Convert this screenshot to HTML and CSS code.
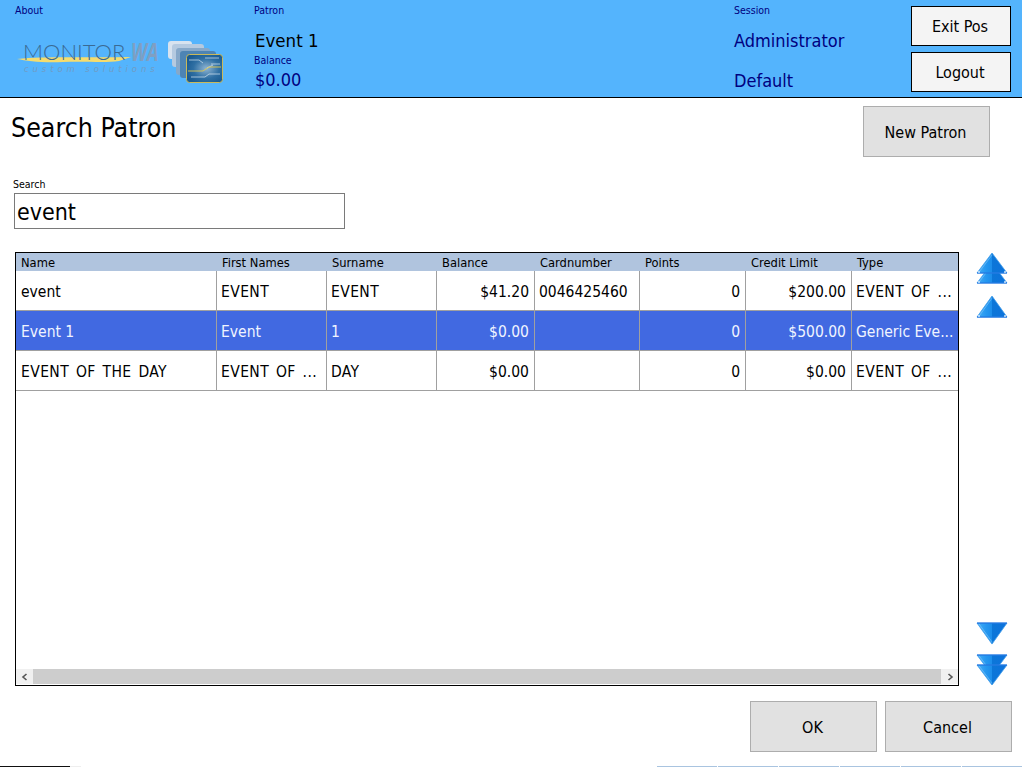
FILE: index.html
```html
<!DOCTYPE html>
<html lang="en">
<head>
<meta charset="utf-8">
<title>Search Patron</title>
<link rel="stylesheet" href="styles.css">
</head>
<body>
<svg class="defs" width="0" height="0" aria-hidden="true">
  <defs>
    <linearGradient id="arrowFill" x1="0" y1="0" x2="1" y2="0">
      <stop offset="0" stop-color="#45aef7"/>
      <stop offset="0.3" stop-color="#2597f0"/>
      <stop offset="0.49" stop-color="#1c8dea"/>
      <stop offset="0.51" stop-color="#0c76d8"/>
      <stop offset="1" stop-color="#0d72dc"/>
    </linearGradient>
    <radialGradient id="chipFill" cx="0.55" cy="0.5" r="0.6">
      <stop offset="0" stop-color="#8fb4d2"/>
      <stop offset="0.6" stop-color="#2f6fa3"/>
      <stop offset="1" stop-color="#1a5a90"/>
    </radialGradient>
    <g id="upArrow">
      <path d="M16 1 L31 21 H1Z" fill="url(#arrowFill)" stroke="#3f9cea" stroke-width="0.8"/>
      <path d="M16 3 L3 20.2" fill="none" stroke="#8fd0fa" stroke-width="0.7" opacity="0.75"/>
      <path d="M1 21 H31" stroke="#1b6fe0" stroke-width="1"/>
      <circle cx="3" cy="20" r="1" fill="#cfe6fb"/>
      <circle cx="29" cy="20" r="1" fill="#cfe6fb"/>
    </g>
    <g id="downArrow">
      <path d="M16 21 L31 1 H1Z" fill="url(#arrowFill)" stroke="#3f9cea" stroke-width="0.8"/>
      <path d="M16 19 L3 1.8" fill="none" stroke="#8fd0fa" stroke-width="0.7" opacity="0.75"/>
      <path d="M1 1 H31" stroke="#1b6fe0" stroke-width="1"/>
    </g>
  </defs>
</svg>
<div class="app">
  <header class="topbar">
    <section class="about">
      <div class="tiny about-label">About</div>
      <svg class="logo" width="212" height="50" viewBox="0 0 212 50">
        <path d="M2 21 C30 18 70 20 116 19 L104 23 C90 25 70 23 48 24 C28 25 12 23 2 21Z" fill="#f5dc6e"/>
        <text x="8" y="22" class="logo-main">MONITOR</text>
        <g transform="translate(116 23) scale(0.72 1)"><text x="0" y="0" class="logo-wa">WA</text></g>
        <text x="9" y="34" class="logo-sub">custom solutions</text>
        <rect x="153" y="3" width="24" height="18" rx="3" fill="#d8e3ef"/>
        <rect x="157" y="6" width="32" height="23" rx="3" fill="#b5cae0"/>
        <rect x="161" y="10" width="34" height="27" rx="3" fill="#86a8c9"/>
        <rect x="165" y="13" width="36" height="27" rx="3" fill="#4d84b4"/>
        <rect x="171.5" y="16.5" width="36" height="28" rx="3" fill="url(#chipFill)" stroke="#c9b95a"/>
        <path d="M174 22 H184 L188 25 M190 20 H204 M176 39 H190 L194 36 H205 M196 26 H205 M192 30 L198 27" fill="none" stroke="#d7e6f2" stroke-width="0.7"/>
        <path d="M173 33 H188 L194 29 H206" fill="none" stroke="#e2c84e" stroke-width="0.9"/>
      </svg>
    </section>
    <section class="patron">
      <div class="tiny">Patron</div>
      <div class="patron-name">Event 1</div>
      <div class="tiny balance-label">Balance</div>
      <div class="value">$0.00</div>
    </section>
    <section class="session">
      <div class="tiny">Session</div>
      <div class="value session-user">Administrator</div>
      <div class="value session-profile">Default</div>
    </section>
    <div class="top-actions">
      <button class="top-btn">Exit Pos</button>
      <button class="top-btn">Logout</button>
    </div>
  </header>

  <main class="content">
    <div class="title-row">
      <h1 class="title">Search Patron</h1>
      <button class="btn new-patron">New Patron</button>
    </div>

    <div class="search">
      <label class="search-label" for="q">Search</label>
      <input class="search-input" id="q" type="text" value="event">
    </div>

    <div class="grid-row">
      <div class="grid">
        <div class="row head">
          <div>Name</div><div>First Names</div><div>Surname</div><div>Balance</div><div>Cardnumber</div><div>Points</div><div>Credit Limit</div><div>Type</div>
        </div>
        <div class="row">
          <div>event</div><div class="caps">EVENT</div><div class="caps">EVENT</div><div class="num">$41.20</div><div>0046425460</div><div class="num">0</div><div class="num">$200.00</div><div class="caps">EVENT OF ...</div>
        </div>
        <div class="row selected">
          <div>Event 1</div><div>Event</div><div>1</div><div class="num">$0.00</div><div></div><div class="num">0</div><div class="num">$500.00</div><div>Generic Eve...</div>
        </div>
        <div class="row">
          <div class="caps">EVENT OF THE DAY</div><div class="caps">EVENT OF ...</div><div class="caps">DAY</div><div class="num">$0.00</div><div></div><div class="num">0</div><div class="num">$0.00</div><div class="caps">EVENT OF ...</div>
        </div>
        <div class="grid-fill"></div>
        <div class="hscroll">
          <div class="hscroll-btn">
            <svg width="8" height="8" viewBox="0 0 8 8"><path d="M5.5 1 L2 4 L5.5 7" fill="none" stroke="#555" stroke-width="1.6"/></svg>
          </div>
          <div class="hscroll-track"></div>
          <div class="hscroll-btn">
            <svg width="8" height="8" viewBox="0 0 8 8"><path d="M2.5 1 L6 4 L2.5 7" fill="none" stroke="#555" stroke-width="1.6"/></svg>
          </div>
        </div>
      </div>

      <div class="pager">
        <div class="pager-group">
          <svg class="arrow" width="32" height="32" viewBox="0 0 32 32">
            <use href="#upArrow" y="10"/>
            <use href="#upArrow"/>
          </svg>
          <svg class="arrow" width="32" height="24" viewBox="0 0 32 24">
            <use href="#upArrow" transform="translate(0 1) scale(1 1.05)"/>
          </svg>
        </div>
        <div class="pager-group">
          <svg class="arrow" width="32" height="24" viewBox="0 0 32 24">
            <use href="#downArrow" transform="scale(1 1.05)"/>
          </svg>
          <svg class="arrow" width="32" height="32" viewBox="0 0 32 32">
            <use href="#downArrow"/>
            <use href="#downArrow" y="10"/>
          </svg>
        </div>
      </div>
    </div>

    <div class="actions">
      <button class="btn">OK</button>
      <button class="btn">Cancel</button>
    </div>
  </main>

  <footer class="strip">
    <div class="strip-dark"></div>
    <div class="strip-light"></div>
    <div class="strip-spacer"></div>
    <div class="strip-seg"></div><div class="strip-seg"></div><div class="strip-seg"></div><div class="strip-seg"></div><div class="strip-seg"></div><div class="strip-seg"></div>
  </footer>
</div>
</body>
</html>
```

FILE: styles.css
```css
* { box-sizing: border-box; }
html, body { margin: 0; padding: 0; height: 100%; background: #fff; overflow: hidden; }
body { font-family: "DejaVu Sans Condensed", "DejaVu Sans", sans-serif; color: #000; }
.defs { position: absolute; }
.app { width: 1022px; height: 767px; display: flex; flex-direction: column; }

.topbar { height: 98px; flex: none; display: flex; background: #54b4fd; border-bottom: 1px solid #000; }
.tiny { font-size: 10.5px; line-height: 12px; color: #000080; }
.about { width: 254px; padding: 4px 0 0 15px; flex: none; }
.about-label { margin-bottom: 22px; }
.logo { display: block; overflow: visible; }
.logo-main { font-family: "Lato", sans-serif; font-size: 22px; font-weight: 300; fill: #3a6a94; }
.logo-wa { font-family: "Open Sans", sans-serif; font-size: 25px; font-style: italic; font-weight: 700; fill: #7f9fc2; }
.logo-sub { font-family: "DejaVu Sans", sans-serif; font-size: 8.5px; font-style: italic; letter-spacing: 3.9px; fill: #6f9cc6; }

.patron { width: 480px; flex: none; padding-top: 4px; }
.patron-name { font-size: 18.5px; line-height: 22px; margin: 14px 0 0 1px; }
.balance-label { margin-top: 2px; }
.value { font-size: 18px; line-height: 22px; color: #000080; }
.patron .value { margin: 3px 0 0 1px; }
.session { width: 177px; flex: none; padding-top: 4px; }
.session-user { margin-top: 14px; }
.session-profile { margin-top: 18px; }
.top-actions { display: flex; flex-direction: column; gap: 6px; padding-top: 6px; }
.top-btn { width: 100px; height: 40px; background: #f4f4f4; border: 1px solid #000; font: inherit; font-size: 16px; padding: 0 2px 0 0; color: #000; }

.content { flex: 1; min-height: 0; display: flex; flex-direction: column; padding: 8px 10px 0 0; }
.title-row { display: flex; justify-content: space-between; align-items: flex-start; padding-left: 11px; padding-right: 22px; }
.title { margin: 5px 0 0; font-size: 26.5px; line-height: 34px; font-weight: 400; }
.btn { width: 127px; height: 51px; background: #e1e1e1; border: 1px solid #adadad; font: inherit; font-size: 16px; padding: 2px 2px 0 0; color: #000; }

.search { margin: 21px 0 0 13px; display: flex; flex-direction: column; }
.search-label { font-size: 10.5px; line-height: 12px; color: #000; }
.search-input { width: 331px; height: 36px; margin: 3px 0 0 1px; border: 1px solid #7a7a7a; font: inherit; font-size: 23px; padding: 2px 2px 0; color: #000; outline: none; }

.grid-row { display: flex; margin-top: 23px; padding-left: 15px; }
.grid { width: 944px; height: 434px; border: 1px solid #000; display: flex; flex-direction: column; overflow: hidden; background: #fff; }
.row { display: grid; grid-template-columns: 201px 110px 110px 98px 105px 106px 106px 106px; height: 40px; flex: none; font-size: 15.5px; line-height: 39px; color: #000; border-bottom: 1px solid #a0a0a0; }
.row > div { padding: 2px 4px 0; border-right: 1px solid #a0a0a0; white-space: nowrap; overflow: hidden; }
.row > div:first-child { padding-left: 5px; }
.row > div:last-child { border-right: 0; }
.row .num { text-align: right; padding-right: 5px; }
.row .caps { letter-spacing: 0.4px; word-spacing: 2px; }
.row.head { height: 18px; background: #b0c4de; font-size: 12.8px; line-height: 19px; border-bottom: 0; }
.row.head > div { border-right: 0; padding: 0 0 0 5px; }
.row.selected { background: #4169e1; color: #f0f4ff; }
.grid-fill { flex: 1; }
.hscroll { height: 15px; margin-bottom: 1px; flex: none; display: flex; background: #f0f0f0; }
.hscroll-btn { width: 17px; display: flex; align-items: center; justify-content: center; }
.hscroll-track { flex: 1; background: #cdcdcd; }

.pager { width: 32px; margin-left: 17px; display: flex; flex-direction: column; justify-content: space-between; }
.pager-group { display: flex; flex-direction: column; gap: 10px; }
.pager-group + .pager-group { gap: 8px; }
.arrow { display: block; }

.actions { display: flex; justify-content: flex-end; gap: 8px; margin-top: 15px; }

.strip { margin-top: auto; height: 1px; flex: none; display: flex; }
.strip-dark { width: 70px; background: #111; }
.strip-light { width: 11px; background: #eee; }
.strip-spacer { flex: 1; }
.strip-seg { width: 61px; background: #a9c4e0; border-left: 1px solid #fff; }
```
